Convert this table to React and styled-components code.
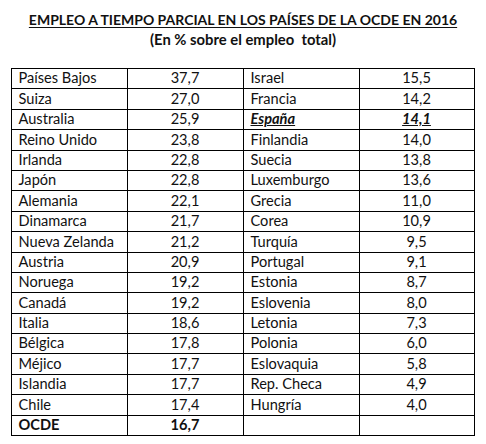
import React from "react";
import styled, { createGlobalStyle } from "styled-components";

const Global = createGlobalStyle`
  html, body { margin: 0; padding: 0; background: #fff; }
  body { font-family: Lato, "Open Sans", sans-serif; color: #000; }
`;

const Page = styled.div`
  width: 486px;
  height: 444px;
  display: flex;
  flex-direction: column;
  align-items: center;
  padding-top: 11px;
  box-sizing: border-box;
`;

const Title = styled.h1`
  margin: 0;
  font-size: 14px;
  font-weight: 700;
  line-height: 18px;
  text-decoration: underline;
  text-underline-offset: 2px;
  color: #111;
`;

const Subtitle = styled.div`
  font-size: 14.8px;
  font-weight: 700;
  line-height: 18px;
  margin-top: 1px;
  color: #111;
  white-space: pre;
`;

const Table = styled.div`
  margin-top: 20px;
  display: grid;
  grid-template-columns: 116px 116px 116px 115px;
  grid-auto-rows: 20.4px;
  border-left: 1px solid #000;
  border-top: 1px solid #000;
  margin-left: -1px;
`;

const Cell = styled.div`
  box-sizing: border-box;
  border-right: 1px solid #000;
  border-bottom: 1px solid #000;
  display: flex;
  align-items: center;
  justify-content: ${(p) => (p.$num ? "center" : "flex-start")};
  padding-left: ${(p) => (p.$num ? "0" : "7px")};
  font-size: 14.6px;
  line-height: 1;
  font-weight: ${(p) => (p.$bold ? 700 : 400)};
  font-style: ${(p) => (p.$italic ? "italic" : "normal")};
  text-decoration: ${(p) => (p.$underline ? "underline" : "none")};
  color: #111;
  white-space: nowrap;
`;

const left = [
  ["Países Bajos", "37,7"],
  ["Suiza", "27,0"],
  ["Australia", "25,9"],
  ["Reino Unido", "23,8"],
  ["Irlanda", "22,8"],
  ["Japón", "22,8"],
  ["Alemania", "22,1"],
  ["Dinamarca", "21,7"],
  ["Nueva Zelanda", "21,2"],
  ["Austria", "20,9"],
  ["Noruega", "19,2"],
  ["Canadá", "19,2"],
  ["Italia", "18,6"],
  ["Bélgica", "17,8"],
  ["Méjico", "17,7"],
  ["Islandia", "17,7"],
  ["Chile", "17,4"],
  ["OCDE", "16,7"],
];

const right = [
  ["Israel", "15,5"],
  ["Francia", "14,2"],
  ["España", "14,1"],
  ["Finlandia", "14,0"],
  ["Suecia", "13,8"],
  ["Luxemburgo", "13,6"],
  ["Grecia", "11,0"],
  ["Corea", "10,9"],
  ["Turquía", "9,5"],
  ["Portugal", "9,1"],
  ["Estonia", "8,7"],
  ["Eslovenia", "8,0"],
  ["Letonia", "7,3"],
  ["Polonia", "6,0"],
  ["Eslovaquia", "5,8"],
  ["Rep. Checa", "4,9"],
  ["Hungría", "4,0"],
  ["", ""],
];

export default function App() {
  return (
    <>
      <Global />
      <Page>
        <Title>EMPLEO A TIEMPO PARCIAL EN LOS PAÍSES DE LA OCDE EN 2016</Title>
        <Subtitle>(En % sobre el empleo  total)</Subtitle>
        <Table>
          {left.map((l, i) => {
            const r = right[i];
            const ocde = l[0] === "OCDE";
            const es = r[0] === "España";
            return (
              <React.Fragment key={i}>
                <Cell $bold={ocde}>{l[0]}</Cell>
                <Cell $num $bold={ocde}>{l[1]}</Cell>
                <Cell $bold={es} $italic={es} $underline={es}>{r[0]}</Cell>
                <Cell $num $bold={es} $italic={es} $underline={es}>{r[1]}</Cell>
              </React.Fragment>
            );
          })}
        </Table>
      </Page>
    </>
  );
}
